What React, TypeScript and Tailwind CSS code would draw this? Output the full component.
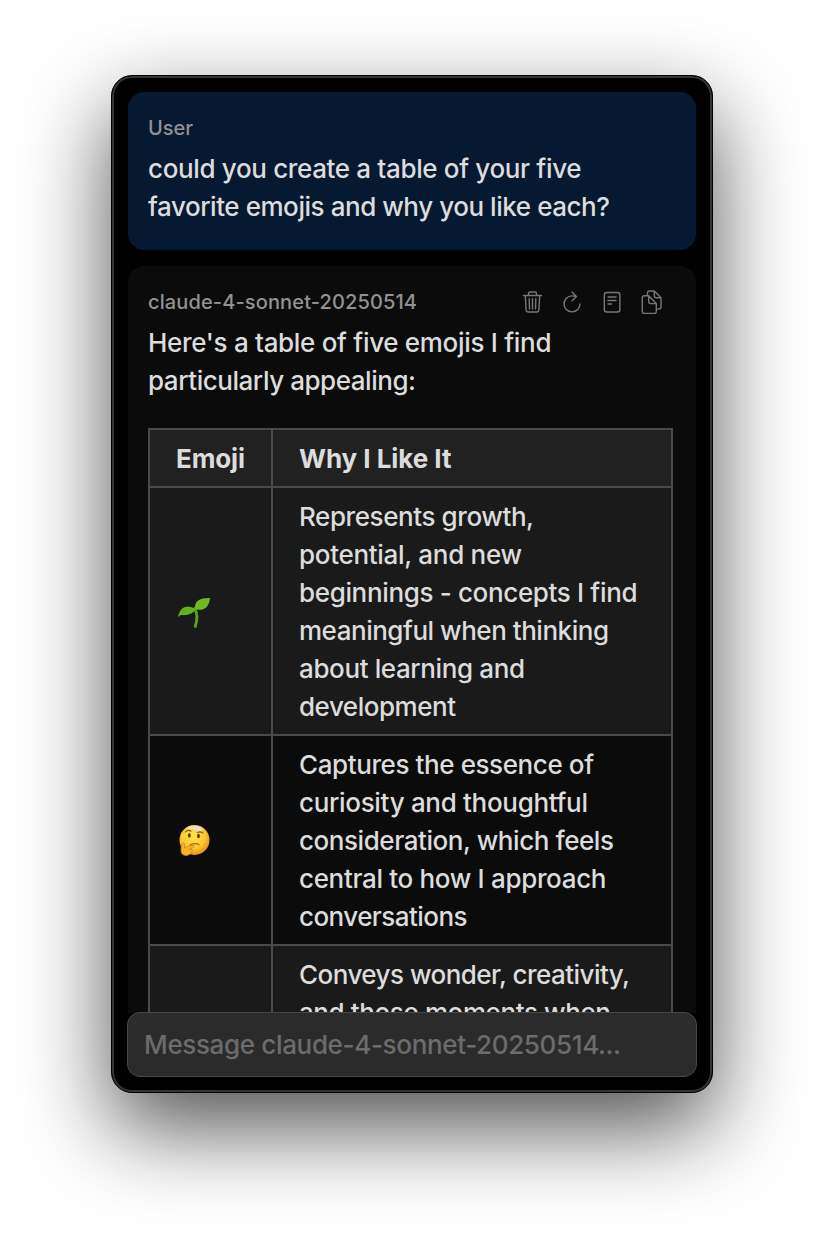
import { useLayoutEffect, useRef, useState } from 'react';
import type { ReactNode } from 'react';

type LineProps = { children: string; width: number; className?: string };

function Line({ children, width, className = 'h-[38px] leading-[38px]' }: LineProps) {
  const ref = useRef<HTMLSpanElement>(null);
  const [tracking, setTracking] = useState(0);
  useLayoutEffect(() => {
    const el = ref.current;
    if (!el) return;
    el.style.letterSpacing = '0px';
    const next = (width - el.getBoundingClientRect().width) / (children.length - 1);
    el.style.letterSpacing = `${next}px`;
    setTracking(next);
  }, [children, width]);
  return (
    <div className={`whitespace-nowrap ${className}`}>
      <span ref={ref} style={{ letterSpacing: tracking }}>{children}</span>
    </div>
  );
}

function Trash() {
  return (
    <svg className="h-6 w-6" viewBox="0 0 24 24" fill="none" stroke="currentColor" strokeWidth="1.4" strokeLinecap="round" strokeLinejoin="round">
      <path d="M3.500 5.500h18M8.500 5.300V3.700c0-1.100.7-1.700 1.700-1.700h4.600c1 0 1.700.6 1.700 1.700v1.600M5.300 5.700l.8 14.500c.1 1.200.8 1.800 1.900 1.800h9c1.100 0 1.800-.6 1.900-1.800l.8-14.500M9.200 8.700l.3 10.200M12.500 8.700v10.200M15.800 8.700l-.3 10.200" />
    </svg>
  );
}
function Retry() {
  return (
    <svg className="h-6 w-6" viewBox="0 0 24 24" fill="none" stroke="currentColor" strokeWidth="1.4" strokeLinecap="round" strokeLinejoin="round">
      <path d="M15.800 6.500C15 6.100 13.700 5.900 12 5.900a8 8 0 1 0 8 8M12 2l4.400 4.400L12 10.800" />
    </svg>
  );
}
function Doc() {
  return (
    <svg className="h-6 w-6" viewBox="0 0 24 24" fill="none" stroke="currentColor" strokeWidth="1.4" strokeLinecap="round" strokeLinejoin="round">
      <rect x="4.300" y="2.500" width="15.600" height="19.500" rx="2.500" />
      <path d="M8 7h8M8 10.500h8M8 14h3.500" />
    </svg>
  );
}
function Copy() {
  return (
    <svg className="h-6 w-6" viewBox="0 0 24 24" fill="none" stroke="currentColor" strokeWidth="1.4" strokeLinecap="round" strokeLinejoin="round">
      <path d="M7.500 5.500V3c0-1.200.8-2 2-2h4.800l6.700 6.800V17c0 1.400-.7 2.100-2.100 2.100H16.500M14.300 1.200v4.600c0 1.200.7 1.900 1.900 1.900H21" />
      <path d="M4.400 5.800h4.200l7.700 7.800v7.800c0 1.400-.7 2.100-2.100 2.100H4.400c-1.400 0-2.100-.7-2.100-2.100V7.900c0-1.400.7-2.100 2.100-2.100ZM8.700 6v5.500c0 1.400.7 2.100 2.100 2.100h5.300" />
    </svg>
  );
}

function Seedling() {
  return (
    <svg className="mt-[3px] h-9 w-9" viewBox="0 0 36 36" role="img" aria-label="Seedling">
      <path d="M18.500 13.500c3 4.500 3 11 .8 18" fill="none" stroke="#5aa51d" strokeWidth="2.800" strokeLinecap="round" />
      <path d="M2 22C4 12 11 8.500 20 14.500C16 20 9 20.500 5 20Z" fill="#62b01e" />
      <path d="M19 14C18 7 23 2.500 34 3c-.8 9-6.500 14-15 11Z" fill="#6dbb22" />
    </svg>
  );
}

function Thinking() {
  return (
    <svg className="h-9 w-9" viewBox="0 0 36 36" role="img" aria-label="Thinking face">
      <defs>
        <radialGradient id="face" cx="45%" cy="38%" r="60%">
          <stop offset="0" stopColor="#ffe24a" />
          <stop offset=".65" stopColor="#fdc92f" />
          <stop offset="1" stopColor="#e99718" />
        </radialGradient>
      </defs>
      <circle cx="18.500" cy="18" r="15" fill="url(#face)" />
      <path d="M9.500 6.800Q18 .7 26.500 6.500Q27 9 23.500 9.200Q16 6.800 9.500 6.800Z" fill="#e6e2d4" />
      <path d="M9.500 9.800Q12 7.300 15 9.200M21.500 10.500q3-1.300 5.300.5" fill="none" stroke="#8a5a16" strokeWidth="1.200" strokeLinecap="round" />
      <ellipse cx="13.300" cy="13.500" rx="1.400" ry="2.300" fill="#553512" />
      <ellipse cx="22.500" cy="14" rx="1.400" ry="2.300" fill="#553512" />
      <path d="M14 23q5-2.500 9-.5" fill="none" stroke="#a76414" strokeWidth="1.300" strokeLinecap="round" />
      <path d="M6 22c1-2 3-1 2.500 1l-.2 2.600 8.200-2.300c2-.4 2.300 1.600.7 2.300l-3.700 1.600c3 .2 3.500 1.800 2 3.400C13 34 8 34.500 5.800 31.500C4.500 29 5 25 6 22Z" fill="#f8b429" stroke="#cf8117" strokeWidth=".8" />
    </svg>
  );
}

const rows: { icon: ReactNode; bg: string; lines: [string, number][] }[] = [
  {
    icon: <Seedling />,
    bg: 'bg-[#1a1a1a]',
    lines: [['Represents growth,', 235], ['potential, and new', 223], ['beginnings - concepts I find', 338.5], ['meaningful when thinking', 310], ['about learning and', 226], ['development', 157]],
  },
  {
    icon: <Thinking />,
    bg: 'bg-[#0b0b0b]',
    lines: [['Captures the essence of', 295], ['curiosity and thoughtful', 289], ['consideration, which feels', 315], ['central to how I approach', 307.5], ['conversations', 168.5]],
  },
  {
    icon: null,
    bg: 'bg-[#1a1a1a]',
    lines: [['Conveys wonder, creativity,', 331], ['and those moments when', 312]],
  },
];

export default function App() {
  return (
    <main className="flex h-[1240px] w-[824px] justify-center overflow-hidden bg-white pt-[75px] font-['Inter',sans-serif]">
      <section className="flex h-[1018px] w-[602px] flex-col overflow-hidden rounded-[21px] border border-black bg-black shadow-[0_35px_88px_rgba(0,0,0,0.68)]">
        <div className="flex min-h-0 flex-1 flex-col rounded-[20px] border-2 border-[#343434] px-[14px] pt-[14px] pb-[13px] text-[26px] font-[450] text-[#dcdcdc]">
          <article className="h-[158px] w-[568px] shrink-0 rounded-[16px] bg-[#051931] px-5 pt-[21px]">
            <Line width={45} className="h-[37px] text-[20px] leading-[30px] text-[#929292]">User</Line>
            <Line width={433.5}>could you create a table of your five</Line>
            <Line width={462}>favorite emojis and why you like each?</Line>
          </article>
          <article className="mt-4 min-h-0 w-[568px] flex-1 overflow-hidden rounded-t-[16px] bg-[#0b0b0b] px-5 pt-[21px]">
            <header className="flex h-[37px] items-start justify-between pr-3 text-[#929292]">
              <Line width={269} className="text-[20px] leading-[30px]">claude-4-sonnet-20250514</Line>
              <div className="flex gap-4 pt-[3px] text-[#777777]"><Trash /><Retry /><Doc /><Copy /></div>
            </header>
            <Line width={403.5}>Here's a table of five emojis I find</Line>
            <Line width={268}>particularly appealing:</Line>
            <div className="mt-7 w-[525px] border-t-2 border-l-2 border-[#4a4a4a]">
              <div className="grid grid-cols-[123px_400px] bg-[#212121] font-bold">
                <div className="border-r-2 border-b-2 border-[#4a4a4a] pt-[10px] pb-2 pl-[26px]"><Line width={69}>Emoji</Line></div>
                <div className="border-r-2 border-b-2 border-[#4a4a4a] pt-[10px] pb-2 pl-[26px]"><Line width={152.5}>Why I Like It</Line></div>
              </div>
              {rows.map((row, i) => (
                <div key={i} className={`grid grid-cols-[123px_400px] ${row.bg}`}>
                  <div className="flex items-center border-r-2 border-b-2 border-[#4a4a4a] pl-[26px]">{row.icon}</div>
                  <div className="border-r-2 border-b-2 border-[#4a4a4a] pt-[10px] pb-2 pl-[26px]">
                    {row.lines.map(([text, width]) => <Line key={text} width={width}>{text}</Line>)}
                  </div>
                </div>
              ))}
            </div>
          </article>
          <div className="-mt-px -ml-px h-[65px] w-[570px] shrink-0 rounded-[13px] border border-[#484848] bg-[#2b2b2b] pt-[13px] pl-4 text-[#6c6c6c]">
            <Line width={477}>Message claude-4-sonnet-20250514...</Line>
          </div>
        </div>
      </section>
    </main>
  );
}
